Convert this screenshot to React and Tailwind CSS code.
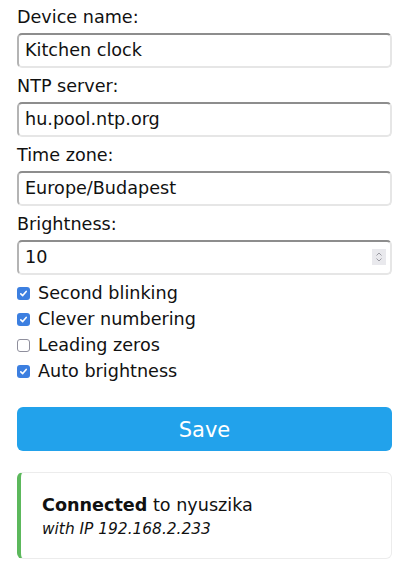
import React from "react";

const font = { fontFamily: '"DejaVu Sans", sans-serif' };

function Field({ label, value, spinner, first }) {
  return (
    <div className="flex flex-col">
      <label className={`block text-[17.6px] leading-[26px] mb-[3px] ${first ? "mt-[4px]" : "mt-[5px]"}`}>{label}</label>
      <div className="relative">
        <input
          readOnly
          value={value}
          className="block w-full h-[35px] px-[6px] pb-[1px] text-[17.6px] text-[#111] bg-white rounded-[5px] border-2 border-t-[#8d8d8d] border-l-[#b4b4b4] border-r-[#e6e6e6] border-b-[#e6e6e6] outline-none"
          style={font}
        />
        {spinner && (
          <div className="absolute right-[6px] top-[9px] w-[14px] h-[16px] bg-[#e9e9ed] flex items-center justify-center">
            <svg width="10" height="12" viewBox="0 0 10 12" fill="none" stroke="#9a9aa2" strokeWidth="1">
              <path d="M2.5 4.5 L5 2 L7.5 4.5" />
              <path d="M2.5 7.5 L5 10 L7.5 7.5" />
            </svg>
          </div>
        )}
      </div>
    </div>
  );
}

function Check({ checked, label }) {
  return (
    <div className="flex items-center h-[26px]">
      {checked ? (
        <span className="w-[13px] h-[13px] rounded-[3px] bg-[#3c7fe0] flex items-center justify-center">
          <svg width="9" height="9" viewBox="0 0 9 9" fill="none" stroke="white" strokeWidth="1.6" strokeLinecap="round" strokeLinejoin="round">
            <path d="M1.8 4.8 L3.7 6.6 L7.2 2.4" />
          </svg>
        </span>
      ) : (
        <span className="w-[13px] h-[13px] rounded-[3px] border-[1.5px] border-[#8f8f9d] bg-white" />
      )}
      <span className="ml-[8px] text-[17.6px]">{label}</span>
    </div>
  );
}

export default function App() {
  return (
    <div className="w-[410px] h-[573px] bg-white text-[#111] pl-[17px] pr-[18px]" style={font}>
      <Field label="Device name:" value="Kitchen clock" first />
      <Field label="NTP server:" value="hu.pool.ntp.org" />
      <Field label="Time zone:" value="Europe/Budapest" />
      <Field label="Brightness:" value="10" spinner />
      <div className="mt-[5px] flex flex-col">
        <Check checked label="Second blinking" />
        <Check checked label="Clever numbering" />
        <Check label="Leading zeros" />
        <Check checked label="Auto brightness" />
      </div>
      <button className="mt-[23px] w-full h-[44px] pt-[3px] rounded-[6px] bg-[#22a2eb] text-white text-[21px] flex items-center justify-center" style={font}>
        Save
      </button>
      <div className="mt-[21px] h-[87px] rounded-[6px] border border-[#ececec] border-l-[4px] border-l-[#5cb85c] pl-[21px] flex flex-col justify-center">
        <div className="text-[17.6px] leading-[22px] mt-[3px]">
          <b className="font-bold">Connected</b> to nyuszika
        </div>
        <div className="text-[15.4px] italic leading-[22px] mt-[2px]">with IP 192.168.2.233</div>
      </div>
    </div>
  );
}
